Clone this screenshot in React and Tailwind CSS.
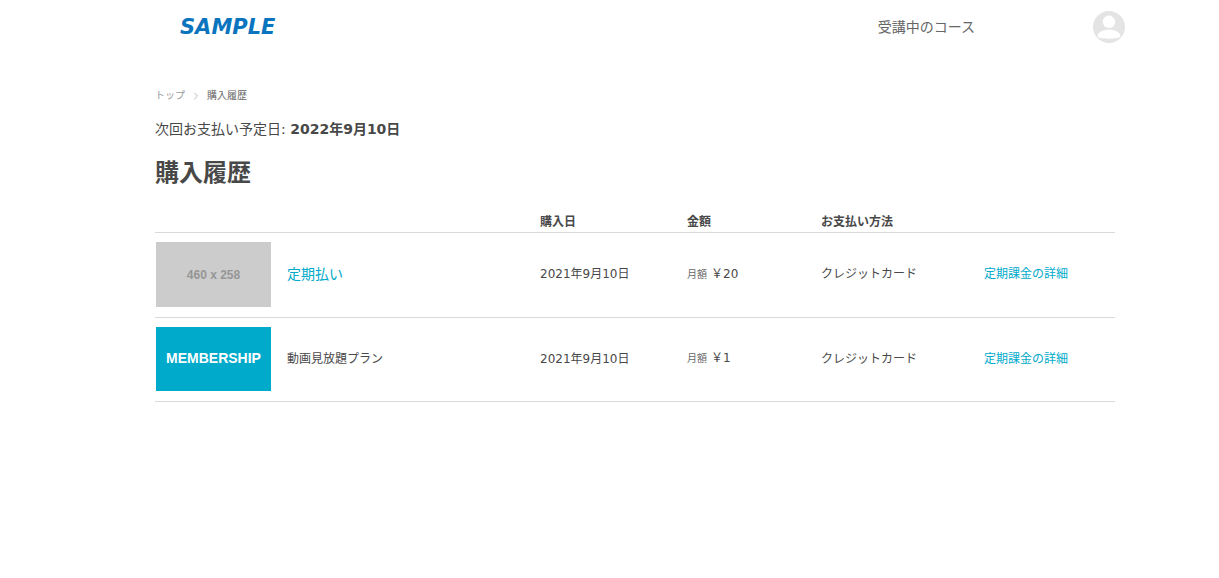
import { ChevronRight } from 'lucide-react';

const PURCHASES = [
  { name: '定期払い', href: '#course', thumb: 'placeholder', date: '2021年9月10日', price: '￥20', method: 'クレジットカード' },
  { name: '動画見放題プラン', href: null, thumb: 'membership', date: '2021年9月10日', price: '￥1', method: 'クレジットカード' },
];

function Avatar() {
  return (
    <svg viewBox="0 0 32 32" className="h-8 w-8" aria-hidden="true">
      <circle cx="16" cy="16" r="16" fill="#e4e4e4" />
      <circle cx="16" cy="10.8" r="6.2" fill="#fff" />
      <path d="M4.6 25.3c0-4.2 5-6.6 11.4-6.6s11.4 2.400 11.400 6.600c0 1.700-3.500 2.400-11.400 2.400s-11.400-.7-11.400-2.400z" fill="#fff" />
    </svg>
  );
}

function Thumb({ type }) {
  if (type === 'membership') {
    return (
      <div className="flex h-16 w-[115px] items-center justify-center bg-[#00aacb] pb-[2px] font-['Liberation_Sans',sans-serif] text-[14px] leading-4 font-bold text-white">
        MEMBERSHIP
      </div>
    );
  }
  return (
    <div className="flex h-[65px] w-[115px] items-center justify-center bg-[#cccccc] font-['Liberation_Sans',sans-serif] text-[12px] leading-4 font-bold text-[#969696]">
      460 x 258
    </div>
  );
}

export default function App() {
  return (
    <div className="min-h-screen bg-white font-['DejaVu_Sans','Noto_Sans_CJK_JP',sans-serif] text-[12px] leading-4 text-[#484848]">

      {/* Header */}
      <header className="flex h-[53px] items-center justify-between pr-[94px] pl-[180px]">
        <a href="#top" className="text-[21px] leading-6 font-bold text-[#0b74be] italic">SAMPLE</a>
        <nav className="flex items-center gap-[118px]">
          <a href="#courses" className="text-[14px] leading-5 text-[#666666]">受講中のコース</a>
          <button type="button" aria-label="アカウント">
            <Avatar />
          </button>
        </nav>
      </header>

      <main className="pt-[35px] pr-[104px] pl-[155px]">

        {/* Breadcrumb */}
        <nav className="flex items-center gap-[5px] text-[10px] leading-4">
          <a href="#top" className="text-[#999999]">トップ</a>
          <ChevronRight className="h-3 w-3 text-[#bbbbbb]" />
          <span className="text-[#666666]">購入履歴</span>
        </nav>

        <p className="mt-[15px] text-[14px] leading-5">
          次回お支払い予定日: <strong className="font-bold">2022年9月10日</strong>
        </p>

        <h1 className="mt-4 text-[24px] leading-9 font-bold">購入履歴</h1>

        {/* Purchases */}
        <table className="mt-[23px] w-full table-fixed border-collapse text-left">
          <colgroup>
            <col className="w-[132px]" />
            <col />
            <col className="w-[147px]" />
            <col className="w-[134px]" />
            <col className="w-[163px]" />
            <col className="w-[131px]" />
          </colgroup>
          <thead>
            <tr className="border-b border-[#d9d9d9]">
              <th />
              <th />
              <th className="pb-[2px] font-bold">購入日</th>
              <th className="pb-[2px] font-bold">金額</th>
              <th className="pb-[2px] font-bold">お支払い方法</th>
              <th />
            </tr>
          </thead>
          <tbody>
            {PURCHASES.map((p) => (
              <tr key={p.name} className="border-b border-[#d9d9d9]">
                <td className="pt-[9px] pb-[10px] pl-px">
                  <Thumb type={p.thumb} />
                </td>
                <td className="pb-[2px]">
                  {p.href ? (
                    <a href={p.href} className="text-[14px] text-[#00aacb]">{p.name}</a>
                  ) : (
                    p.name
                  )}
                </td>
                <td className="pb-[2px]">{p.date}</td>
                <td className="pb-[2px]">
                  <span className="mr-1 text-[10px] text-[#666666]">月額</span>
                  {p.price}
                </td>
                <td className="pb-[2px]">{p.method}</td>
                <td className="pb-[2px]">
                  <a href="#detail" className="text-[#00aacb]">定期課金の詳細</a>
                </td>
              </tr>
            ))}
          </tbody>
        </table>

      </main>
    </div>
  );
}
